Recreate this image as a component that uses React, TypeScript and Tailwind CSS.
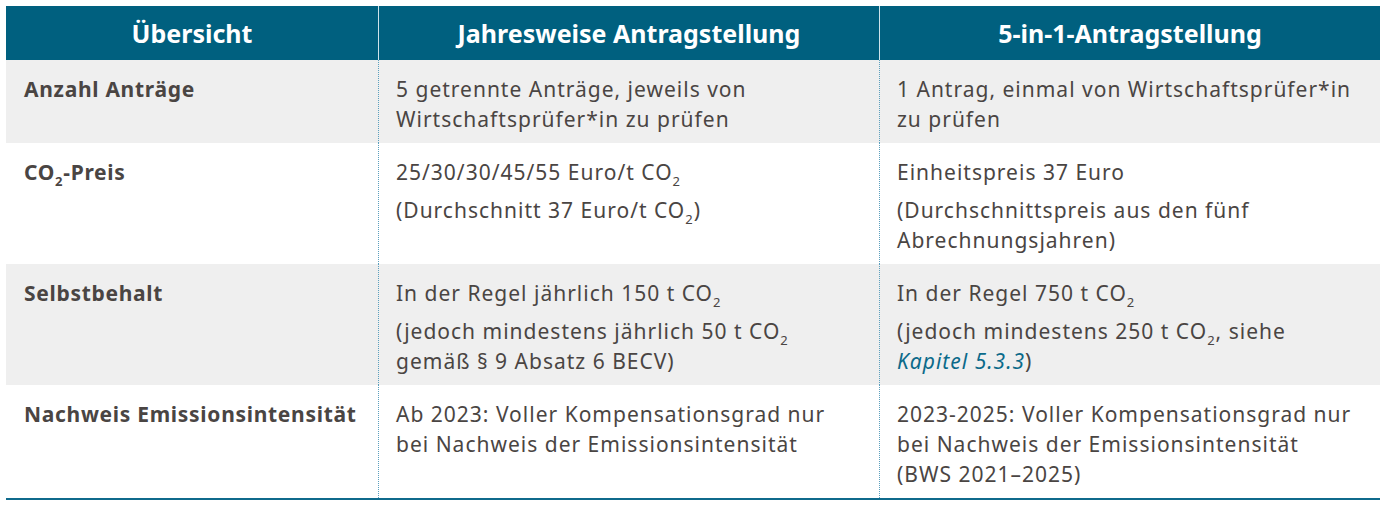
import React from 'react';

const Sub = () => <sub className="text-[0.62em] leading-none align-[-0.2em]">2</sub>;

const CO2 = () => (
  <>
    CO<Sub />
  </>
);

type Row = { label: React.ReactNode; a: React.ReactNode[]; b: React.ReactNode[]; shaded: boolean };

const rows: Row[] = [
  {
    label: 'Anzahl Anträge',
    a: [<>5 getrennte Anträge, jeweils von Wirtschaftsprüfer*in zu prüfen</>],
    b: [<>1 Antrag, einmal von Wirtschaftsprüfer*in zu prüfen</>],
    shaded: true,
  },
  {
    label: (
      <>
        CO<Sub />-Preis
      </>
    ),
    a: [
      <>25/30/30/45/55 Euro/t <CO2 /></>,
      <>(Durchschnitt 37 Euro/t <CO2 />)</>,
    ],
    b: [<>Einheitspreis 37 Euro</>, <>(Durchschnittspreis aus den fünf Abrechnungsjahren)</>],
    shaded: false,
  },
  {
    label: 'Selbstbehalt',
    a: [
      <>In der Regel jährlich 150 t <CO2 /></>,
      <>(jedoch mindestens jährlich 50 t <CO2 /> gemäß § 9 Absatz 6 BECV)</>,
    ],
    b: [
      <>In der Regel 750 t <CO2 /></>,
      <>
        (jedoch mindestens 250 t <CO2 />, siehe <span className="italic text-[#0b6a8a]">Kapitel 5.3.3</span>)
      </>,
    ],
    shaded: true,
  },
  {
    label: 'Nachweis Emissionsintensität',
    a: [<>Ab 2023: Voller Kompensationsgrad nur bei Nachweis der Emissionsintensität</>],
    b: [<>2023-2025: Voller Kompensationsgrad nur bei Nachweis der Emissionsintensität (BWS 2021–2025)</>],
    shaded: false,
  },
];

function Cell({ lines }: { lines: React.ReactNode[] }) {
  return (
    <div className="pl-[17px] pr-[22px] pt-[14px] pb-[9px] flex flex-col gap-2 tracking-[1px] border-l border-dotted border-[#5b9fbd]">
      {lines.map((l, i) => (
        <p key={i}>{l}</p>
      ))}
    </div>
  );
}

export default function App() {
  return (
    <div
      className="w-[1385px] h-[510px] bg-white pt-[6px] px-[6px]"
      style={{ fontFamily: '"Noto Sans", "Open Sans", sans-serif' }}
    >
      <div className="w-[1374px] text-[#4a4543] text-[21px] leading-[30px]">
        <div className="grid grid-cols-[372px_501px_501px] bg-[#00607f] text-white font-bold text-[25px] h-[54px]">
          <div className="flex items-center justify-center">Übersicht</div>
          <div className="flex items-center justify-center border-l border-[#cfe3ea]">Jahresweise Antragstellung</div>
          <div className="flex items-center justify-center border-l border-[#cfe3ea]">5-in-1-Antragstellung</div>
        </div>
        {rows.map((r, i) => (
          <div key={i} className={`grid grid-cols-[372px_501px_501px] ${r.shaded ? 'bg-[#efefef]' : 'bg-white'}`}>
            <div className="pl-[18px] pr-2 pt-[14px] pb-[9px] font-bold tracking-[0.7px]">{r.label}</div>
            <Cell lines={r.a} />
            <Cell lines={r.b} />
          </div>
        ))}
        <div className="h-[2px] bg-[#0f6a8c]" />
      </div>
    </div>
  );
}
